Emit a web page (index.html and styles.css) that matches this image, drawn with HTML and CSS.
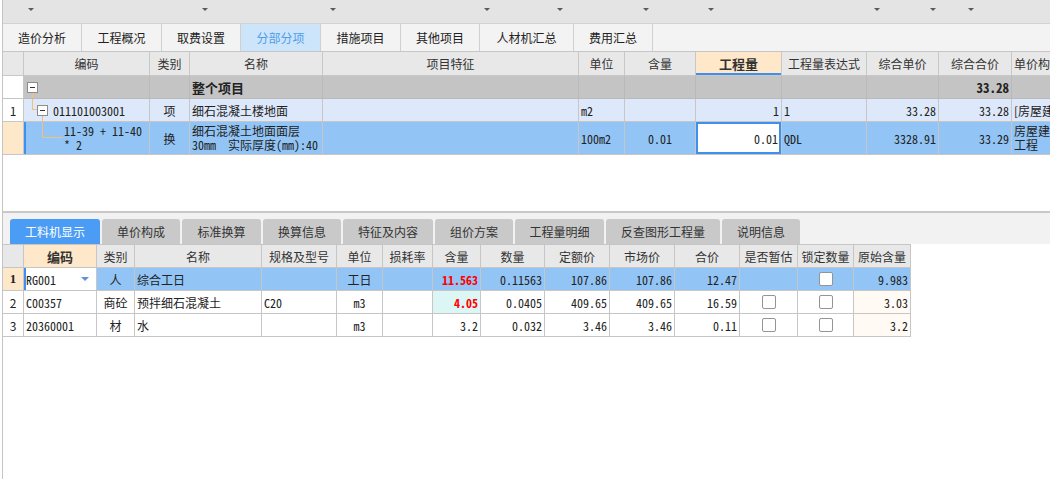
FILE: index.html
```html
<!DOCTYPE html>
<html lang="zh-CN">
<head>
<meta charset="utf-8">
<title>分部分项</title>
<link rel="stylesheet" href="styles.css">
</head>
<body>
<div class="app">
  <div class="topbar">
    <span class="dd"><i></i></span>
    <span class="dd"><i></i></span>
    <span class="dd"><i></i></span>
    <span class="dd"><i></i></span>
    <span class="dd"><i></i></span>
    <span class="dd"><i></i></span>
    <span class="dd"><i></i></span>
    <span class="dd"><i></i></span>
    <span class="dd"><i></i></span>
    <span class="dd"><i></i></span>
  </div>

  <div class="tabs">
    <div class="tab w78">造价分析</div>
    <div class="tab w79">工程概况</div>
    <div class="tab w78">取费设置</div>
    <div class="tab w79 active">分部分项</div>
    <div class="tab w79">措施项目</div>
    <div class="tab w78">其他项目</div>
    <div class="tab w93">人材机汇总</div>
    <div class="tab w78">费用汇总</div>
  </div>

  <div class="ugrid">
    <div class="urow uhead">
      <div class="c"></div>
      <div class="c center">编码</div>
      <div class="c center">类别</div>
      <div class="c center">名称</div>
      <div class="c center">项目特征</div>
      <div class="c center">单位</div>
      <div class="c center">含量</div>
      <div class="c center qty-head">工程量</div>
      <div class="c center">工程量表达式</div>
      <div class="c center">综合单价</div>
      <div class="c center">综合合价</div>
      <div class="c">单价构成文件</div>
    </div>

    <div class="urow r0">
      <div class="c rn"></div>
      <div class="c tree">
        <div class="node0">
          <span class="box"></span>
          <span class="vline"></span>
        </div>
      </div>
      <div class="c"></div>
      <div class="c bold">整个项目</div>
      <div class="c"></div>
      <div class="c"></div>
      <div class="c"></div>
      <div class="c"></div>
      <div class="c"></div>
      <div class="c"></div>
      <div class="c right mono bold">33.28</div>
      <div class="c"></div>
    </div>

    <div class="urow r1">
      <div class="c rn center">1</div>
      <div class="c tree">
        <span class="elbow1"></span>
        <div class="node1">
          <span class="box"></span>
          <span class="vline"></span>
        </div>
        <span class="mono code1">011101003001</span>
      </div>
      <div class="c center">项</div>
      <div class="c">细石混凝土楼地面</div>
      <div class="c"></div>
      <div class="c mono">m2</div>
      <div class="c"></div>
      <div class="c right mono">1</div>
      <div class="c mono">1</div>
      <div class="c right mono">33.28</div>
      <div class="c right mono">33.28</div>
      <div class="c nowrap">[房屋建筑与装饰工程]</div>
    </div>

    <div class="urow r2">
      <div class="c rn sel-rn"></div>
      <div class="c tree sel-left">
        <span class="elbow2"></span>
        <span class="mono code2">11-39 + 11-40<br>* 2</span>
      </div>
      <div class="c center">换</div>
      <div class="c">
        <div class="two">
          <span>细石混凝土地面面层</span>
          <span class="mono">30mm&nbsp;&nbsp;实际厚度(mm):40</span>
        </div>
      </div>
      <div class="c"></div>
      <div class="c mono">100m2</div>
      <div class="c center mono">0.01</div>
      <div class="c right mono editing">0.01</div>
      <div class="c mono">QDL</div>
      <div class="c right mono">3328.91</div>
      <div class="c right mono">33.29</div>
      <div class="c"><div class="two nowrap"><span>房屋建筑与装饰</span><span>工程</span></div></div>
    </div>
  </div>

  <div class="spacer"></div>

  <div class="lower">
    <div class="ltabs">
      <div class="ltab active lw90">工料机显示</div>
      <div class="ltab lw78">单价构成</div>
      <div class="ltab lw79">标准换算</div>
      <div class="ltab lw78">换算信息</div>
      <div class="ltab lw90">特征及内容</div>
      <div class="ltab lw78">组价方案</div>
      <div class="ltab lw89">工程量明细</div>
      <div class="ltab lw114">反查图形工程量</div>
      <div class="ltab lw78">说明信息</div>
    </div>

    <div class="lgrid">
      <div class="lrow lhead">
        <div class="c"></div>
        <div class="c center code-head">编码</div>
        <div class="c center">类别</div>
        <div class="c center">名称</div>
        <div class="c center">规格及型号</div>
        <div class="c center">单位</div>
        <div class="c center">损耗率</div>
        <div class="c center">含量</div>
        <div class="c center">数量</div>
        <div class="c center">定额价</div>
        <div class="c center">市场价</div>
        <div class="c center">合价</div>
        <div class="c center">是否暂估</div>
        <div class="c center">锁定数量</div>
        <div class="c center">原始含量</div>
      </div>

      <div class="lrow lsel">
        <div class="c center rn sel-rn rn-bold">1</div>
        <div class="c mono edit-code">RG001<i class="drop"></i></div>
        <div class="c center">人</div>
        <div class="c">综合工日</div>
        <div class="c"></div>
        <div class="c center">工日</div>
        <div class="c"></div>
        <div class="c right mono red">11.563</div>
        <div class="c right mono">0.11563</div>
        <div class="c right mono">107.86</div>
        <div class="c right mono">107.86</div>
        <div class="c right mono">12.47</div>
        <div class="c"></div>
        <div class="c center"><span class="cb"></span></div>
        <div class="c right mono">9.983</div>
      </div>

      <div class="lrow">
        <div class="c center rn">2</div>
        <div class="c mono">C00357</div>
        <div class="c center">商砼</div>
        <div class="c">预拌细石混凝土</div>
        <div class="c mono">C20</div>
        <div class="c center mono">m3</div>
        <div class="c"></div>
        <div class="c right mono red cyan">4.05</div>
        <div class="c right mono">0.0405</div>
        <div class="c right mono">409.65</div>
        <div class="c right mono">409.65</div>
        <div class="c right mono">16.59</div>
        <div class="c center"><span class="cb"></span></div>
        <div class="c center"><span class="cb"></span></div>
        <div class="c right mono cream">3.03</div>
      </div>

      <div class="lrow">
        <div class="c center rn">3</div>
        <div class="c mono">20360001</div>
        <div class="c center">材</div>
        <div class="c">水</div>
        <div class="c"></div>
        <div class="c center mono">m3</div>
        <div class="c"></div>
        <div class="c right mono">3.2</div>
        <div class="c right mono">0.032</div>
        <div class="c right mono">3.46</div>
        <div class="c right mono">3.46</div>
        <div class="c right mono">0.11</div>
        <div class="c center"><span class="cb"></span></div>
        <div class="c center"><span class="cb"></span></div>
        <div class="c right mono cream">3.2</div>
      </div>
    </div>
  </div>
</div>
</body>
</html>
```
FILE: styles.css
```css
* { box-sizing: border-box; }
html, body { margin: 0; padding: 0; }
body {
  font-family: "Noto Sans CJK SC", "Noto Sans", sans-serif;
  font-size: 12px;
  color: #222;
  background: #fff;
  overflow: hidden;
  width: 1050px;
  height: 479px;
}
.app {
  margin-left: 2px;
  border-left: 1px solid #c4c4c4;
  height: 479px;
  width: 1048px;
  display: flex;
  flex-direction: column;
  overflow: hidden;
}

/* top toolbar */
.topbar {
  flex: none;
  height: 24px;
  background: #e4e4e4;
  border-bottom: 1px solid #d2d2d2;
  display: grid;
  grid-template-columns: 31px 174px 128px 154px 73px 86px 65px 166px 56px 38px;
}
.dd { display: flex; justify-content: flex-end; padding-top: 8px; }
.dd i {
  width: 0; height: 0;
  border-left: 3px solid transparent;
  border-right: 3px solid transparent;
  border-top: 3px solid #5a5a5a;
}

/* main tabs */
.tabs {
  flex: none;
  height: 28px;
  background: #f3f3f3;
  border-bottom: 1px solid #c6c6c6;
  display: flex;
}
.tab {
  height: 27px;
  border-right: 1px solid #d0d0d0;
  display: flex;
  align-items: center;
  justify-content: center;
  color: #222;
  font-size: 12px;
}
.tab.active { background: #cde5fb; color: #4f9de9; }
.w78 { width: 79px; }
.w79 { width: 80px; }
.w93 { width: 94px; }

/* generic cell */
.c {
  display: flex;
  align-items: center;
  padding: 0 2px;
  border-right: 1px solid #c6c6c6;
  border-bottom: 1px solid #c6c6c6;
  overflow: hidden;
  white-space: nowrap;
  min-width: 0;
}
.center { justify-content: center; }
.right { justify-content: flex-end; }
.bold { font-weight: bold; font-size: 13px; }
.mono { font-family: "Noto Sans Mono CJK SC", "Liberation Mono", monospace; }
.nowrap { white-space: nowrap; }

/* upper grid */
.ugrid { flex: none; width: 1100px; }
.urow {
  display: grid;
  grid-template-columns: 21px 126px 40px 133px 256px 46px 71px 86px 85px 72px 73px 120px;
}
.uhead { height: 24px; background: #e8e8e8; color: #333; }
.uhead .c { border-color: #c8c8c8; }
.qty-head {
  background: #fee8c9;
  font-weight: bold;
  font-size: 13px;
  box-shadow: inset 0 -2px 0 #3d8ff0;
}
.r0 { height: 23px; background: #c4c4c4; }
.r0 .c { border-color: #b9b9b9; }
.r0 .rn { background: #fff; border-color: #c6c6c6; }
.r1 { height: 23px; background: #dde9fb; }
.r1 .rn { background: #fff; }
.r2 { height: 33px; background: #92c5f5; }
.sel-rn { background: #fde8c9; }
.sel-left { box-shadow: inset 2px 0 0 #3d8ff0; }
.editing { background: #fff; box-shadow: inset 0 0 0 2px #3d8ff0; padding-right: 3px; }

.tree { align-items: flex-start; padding: 0; }
.box {
  display: block;
  width: 11px;
  height: 11px;
  border: 1px solid #8c8c8c;
  background: #fff;
  position: relative;
}
.box::after {
  content: "";
  position: absolute;
  left: 2px; right: 2px; top: 4px;
  height: 1px;
  background: #333;
}
.vline { display: block; flex: 1; margin-left: 5px; border-left: 1px solid #f3bf79; }
.node0 { display: flex; flex-direction: column; height: 22px; padding-top: 6px; margin-left: 3px; }
.elbow1 {
  display: block; margin-left: 8px; width: 5px; height: 11px;
  border-left: 1px solid #f3bf79; border-bottom: 1px solid #f3bf79;
}
.node1 { display: flex; flex-direction: column; height: 22px; padding-top: 6px; }
.code1 { align-self: center; margin-left: 5px; }
.elbow2 {
  display: block; margin-left: 18px; width: 21px; height: 16px;
  border-left: 1px solid #f3bf79; border-bottom: 1px solid #f3bf79;
}
.code2 { align-self: center; margin-left: 1px; line-height: 14px; white-space: nowrap; }
.two { display: flex; flex-direction: column; line-height: 14px; }

.spacer { flex: none; height: 58px; border-bottom: 2px solid #c8c8c8; }

/* lower pane */
.lower { flex: none; background: #fff; }
.ltabs {
  height: 31px;
  background: #f2f2f2;
  padding: 6px 0 0 7px;
  display: flex;
  gap: 2px;
  width: 1100px;
}
.ltab {
  height: 25px;
  border-radius: 3px 3px 0 0;
  background: #c9c9c9;
  color: #333;
  display: flex;
  align-items: center;
  justify-content: center;
}
.ltab.active { background: #4a9cf4; color: #fff; }
.lw90 { width: 90px; }
.lw78 { width: 78px; }
.lw79 { width: 79px; }
.lw89 { width: 89px; }
.lw114 { width: 114px; }

.lgrid { border-top: 1px solid #c6c6c6; width: 908px; }
.lrow {
  display: grid;
  grid-template-columns: 21px 73px 38px 127px 75px 46px 50px 48px 64px 65px 65px 65px 58px 56px 57px;
  height: 23px;
}
.lhead { background: #e8e8e8; color: #333; }
.code-head { background: #fee8c9; font-weight: bold; font-size: 13px; }
.lsel { background: #92c5f5; }
.rn-bold { font-family: "Liberation Serif", serif; font-weight: bold; font-size: 13px; }
.edit-code { background: #fff; box-shadow: inset 2px 0 0 #3d8ff0; }
.drop {
  margin-left: auto;
  margin-right: 5px;
  width: 0; height: 0;
  border-left: 4px solid transparent;
  border-right: 4px solid transparent;
  border-top: 4px solid #5f93d3;
}
.red { color: #f00; font-weight: bold; }
.cyan { background: #dcf6f6; }
.cream { background: #fffaf3; }
.cb {
  display: block;
  width: 14px;
  height: 14px;
  border: 1px solid #949494;
  border-radius: 2px;
  background: #fff;
}
```
